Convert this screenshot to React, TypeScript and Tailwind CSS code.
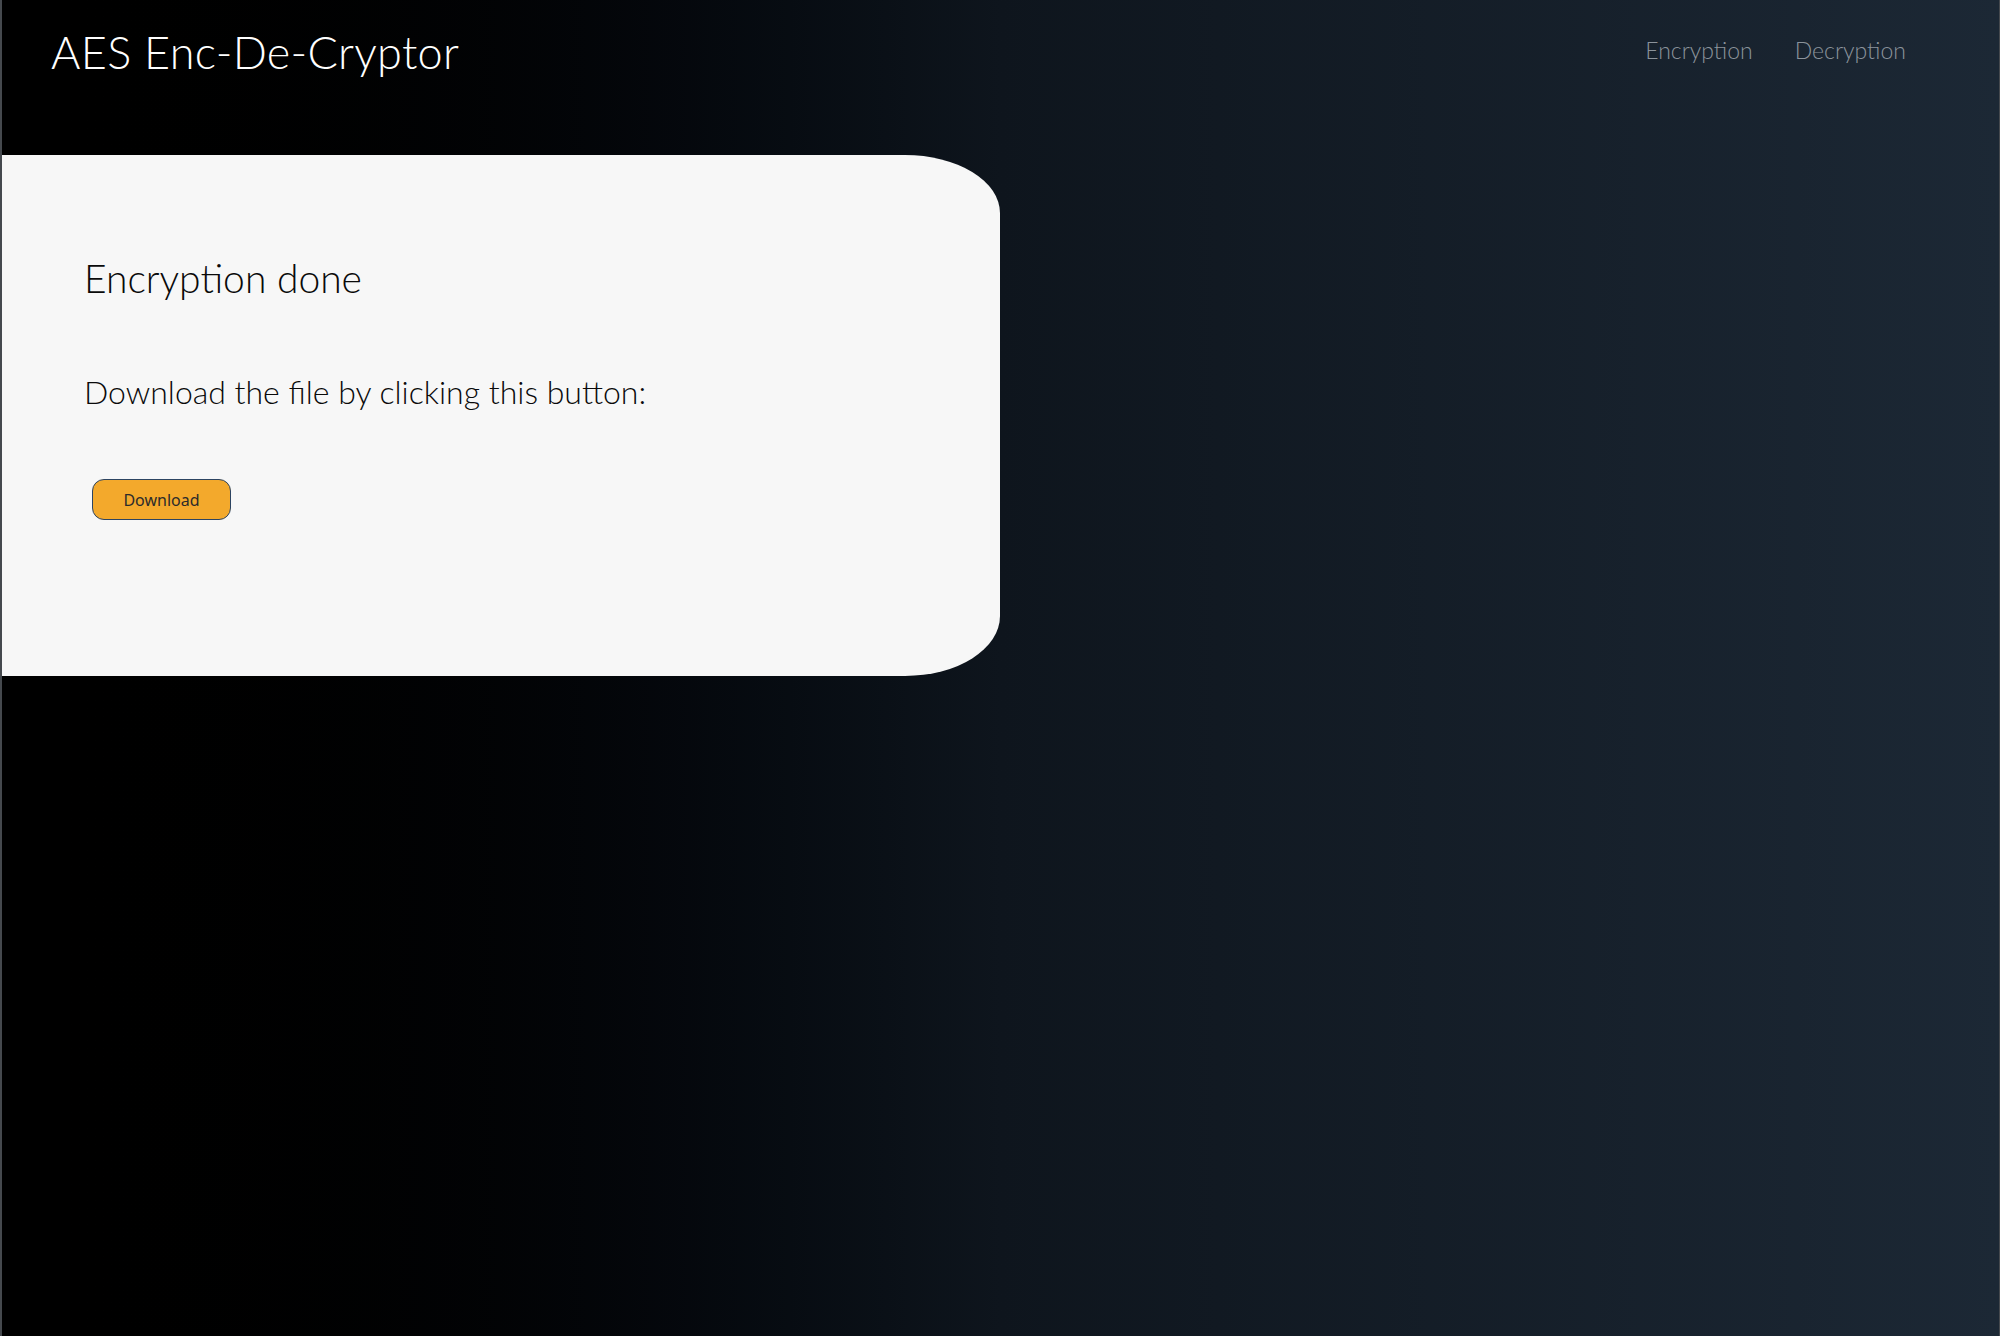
export default function App() {
    return (
        <div className="min-h-[1336px] w-full border-l-2 border-r border-[#45494e] bg-linear-to-r from-black via-[#0e151d] to-[#1c2835] font-['Lato','Noto_Sans',sans-serif]">
            <header className="flex items-start justify-between pl-[49px] pr-[93px] pt-[24px]">
                <h1 className="text-[45px] font-light leading-[56px] tracking-[0.3px] text-white">AES Enc-De-Cryptor</h1>
                <nav className="flex gap-[42px] pt-[9px] text-[23px] font-light text-[#8b939b]">
                    <a className="cursor-pointer">Encryption</a>
                    <a className="cursor-pointer">Decryption</a>
                </nav>
            </header>
            <main className="mt-[75px] flex h-[521px] w-[998px] flex-col rounded-tr-[95px_58px] rounded-br-[95px_60px] bg-[#f7f7f7] pl-[82px] pt-[104px]">
                <h2 className="text-[39px] font-light leading-none text-[#0a0a0a]">Encryption done</h2>
                <p className="mt-[78px] text-[32px] font-light leading-none text-[#0a0a0a]">Download the file by clicking this button:</p>
                <div className="mt-[71px] pl-[8px]">
                    <button className="h-[41px] w-[139px] rounded-[12px] border-[1.5px] border-[#2c4462] bg-[#f3a92c] font-['Noto_Sans',sans-serif] text-[16px] text-[#2b2b2b]">Download</button>
                </div>
            </main>
        </div>
    );
}
